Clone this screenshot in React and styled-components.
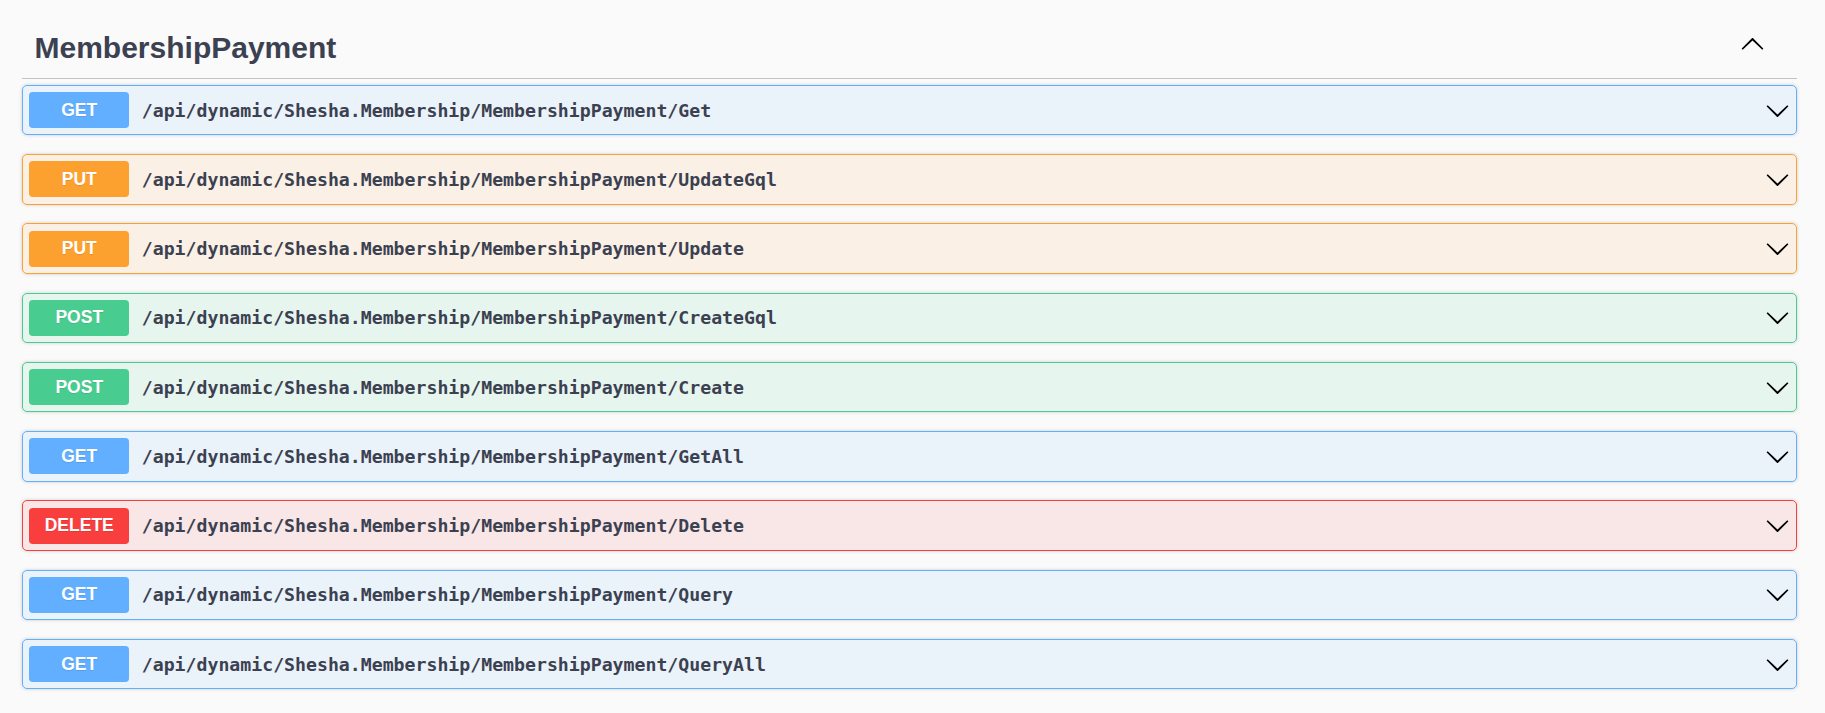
import React from 'react'
import styled, { createGlobalStyle } from 'styled-components'

const GlobalStyle = createGlobalStyle`
    html, body {
        margin: 0;
        padding: 0;
        background: #fafafa;
    }
    body {
        font-family: "Liberation Sans", Arial, sans-serif;
        color: #3b4151;
    }
`

const METHODS = {
    get: { color: '#61affe', bg: 'rgba(97,175,254,.1)' },
    put: { color: '#fca130', bg: 'rgba(252,161,48,.1)' },
    post: { color: '#49cc90', bg: 'rgba(73,204,144,.1)' },
    delete: { color: '#f93e3e', bg: 'rgba(249,62,62,.1)' },
}

const BASE = '/api/dynamic/Shesha.Membership/MembershipPayment/'

const operations = [
    { method: 'get', name: 'Get' },
    { method: 'put', name: 'UpdateGql' },
    { method: 'put', name: 'Update' },
    { method: 'post', name: 'CreateGql' },
    { method: 'post', name: 'Create' },
    { method: 'get', name: 'GetAll' },
    { method: 'delete', name: 'Delete' },
    { method: 'get', name: 'Query' },
    { method: 'get', name: 'QueryAll' },
]

function Arrow({ up }) {
    return (
        <ArrowSvg viewBox="0 0 20 20" $up={up} aria-hidden="true">
            <path d="M17.418 6.109c.272-.268.709-.268.979 0s.271.701 0 .969l-7.908 7.83c-.27.268-.707.268-.979 0l-7.908-7.83c-.27-.268-.27-.701 0-.969.271-.268.709-.268.979 0L10 13.25l7.418-7.141z" />
        </ArrowSvg>
    )
}

export default function App() {
    return (
        <>
            <GlobalStyle />
            <Wrapper>
                <TagSection>
                    <TagHeader>
                        <TagTitle>MembershipPayment</TagTitle>
                        <ExpandButton type="button">
                            <Arrow up />
                        </ExpandButton>
                    </TagHeader>
                    {operations.map((op, i) => (
                        <OpBlock key={i} $method={op.method}>
                            <Summary>
                                <MethodBadge $method={op.method}>{op.method.toUpperCase()}</MethodBadge>
                                <Path>{BASE + op.name}</Path>
                                <Arrow />
                            </Summary>
                        </OpBlock>
                    ))}
                </TagSection>
            </Wrapper>
        </>
    )
}

const Wrapper = styled.div`
    padding: 17.6px 28px 0 22px;
`

const TagSection = styled.div`
    display: flex;
    flex-direction: column;
`

const TagHeader = styled.h4`
    display: flex;
    align-items: center;
    margin: 0 0 6.25px;
    padding: 12px 32.5px 13px 12.5px;
    border-bottom: 1px solid rgba(59, 65, 81, .3);
    cursor: pointer;
`

const TagTitle = styled.span`
    flex: 1;
    font-family: "Liberation Sans", Arial, sans-serif;
    font-size: 30px;
    line-height: 35px;
    font-weight: 700;
    color: #3b4151;
`

const ExpandButton = styled.button`
    display: flex;
    border: none;
    background: none;
    padding: 0;
    margin-bottom: 5px;
    cursor: pointer;
`

const ArrowSvg = styled.svg`
    width: 25px;
    height: 25px;
    flex-shrink: 0;
    fill: #000;
    transform: ${p => (p.$up ? 'rotate(180deg)' : 'none')};
`

const OpBlock = styled.div`
    margin: 0 0 18.75px;
    border: 1px solid ${p => METHODS[p.$method].color};
    border-radius: 5px;
    background: ${p => METHODS[p.$method].bg};
    box-shadow: 0 0 3.75px rgba(0, 0, 0, .19);
`

const Summary = styled.div`
    display: flex;
    align-items: center;
    padding: 6.25px;
    cursor: pointer;
`

const MethodBadge = styled.span`
    min-width: 100px;
    padding: 7.5px 0;
    border-radius: 3.75px;
    background: ${p => METHODS[p.$method].color};
    color: #fff;
    font-family: "Liberation Sans", Arial, sans-serif;
    font-size: 17.5px;
    line-height: 21px;
    font-weight: 700;
    text-align: center;
    text-shadow: 0 1px 0 rgba(0, 0, 0, .1);
`

const Path = styled.span`
    flex: 1;
    padding: 0 12.5px;
    font-family: "DejaVu Sans Mono", monospace;
    font-size: 18.2px;
    font-weight: 600;
    color: #3b4151;
`
